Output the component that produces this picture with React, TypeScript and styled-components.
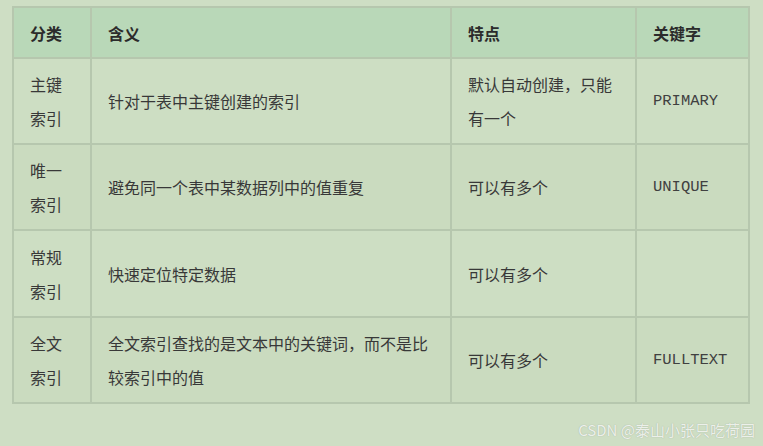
import { createGlobalStyle, styled } from 'styled-components';

const GlobalStyle = createGlobalStyle`
  html, body {
    margin: 0;
    padding: 0;
    background: #cedec4;
  }
  body {
    font-family: "Noto Sans CJK SC", "Liberation Sans", sans-serif;
    color: #333;
  }
`;

const Page = styled.div`
  width: 763px;
  height: 446px;
  padding: 6px 0 0 12px;
  box-sizing: border-box;
  display: flex;
  flex-direction: column;
`;

const Table = styled.table`
  table-layout: fixed;
  border-collapse: separate;
  border-spacing: 2px;
  background: #b6c7ae;
  width: 738px;
`;

const HeadCell = styled.th<{ w: number }>`
  width: ${(p) => p.w}px;
  height: 49px;
  padding: 0 0 0 16px;
  box-sizing: border-box;
  background: #b9d8b8;
  text-align: left;
  font-size: 16px;
  font-weight: 700;
  color: #2b2b2b;
`;

const Row = styled.tr<{ h: number; tone?: string }>`
  height: ${(p) => p.h}px;
  background: ${(p) => p.tone ?? '#cddec3'};
`;

const Cell = styled.td<{ mono?: boolean; narrow?: boolean }>`
  padding: 0 ${(p) => (p.narrow ? 20 : 12)}px 0 16px;
  box-sizing: border-box;
  vertical-align: middle;
  font-size: 16px;
  line-height: 34px;
  color: #383838;
  font-family: ${(p) => (p.mono ? '"Liberation Mono", monospace' : 'inherit')};
  ${(p) => (p.mono ? 'font-size: 15.5px; color: #404040;' : '')}
`;

const Watermark = styled.div`
  align-self: flex-end;
  margin: 15px 8px 0 0;
  font-size: 15px;
  color: rgba(250, 252, 248, 0.85);
  text-shadow: 0 0 1px rgba(120, 130, 120, 0.6);
  font-family: "Noto Sans CJK SC", "Liberation Sans", sans-serif;
`;

type Item = { kind: string; meaning: string; trait: string; key: string; h: number; tone?: string };

const rows: Item[] = [
  { kind: '主键索引', meaning: '针对于表中主键创建的索引', trait: '默认自动创建，只能有一个', key: 'PRIMARY', h: 84 },
  { kind: '唯一索引', meaning: '避免同一个表中某数据列中的值重复', trait: '可以有多个', key: 'UNIQUE', h: 84, tone: '#cadbbf' },
  { kind: '常规索引', meaning: '快速定位特定数据', trait: '可以有多个', key: '', h: 85 },
  { kind: '全文索引', meaning: '全文索引查找的是文本中的关键词，而不是比较索引中的值', trait: '可以有多个', key: 'FULLTEXT', h: 84, tone: '#cadbbf' },
];

export default function App() {
  return (
    <Page>
      <GlobalStyle />
      <Table>
        <thead>
          <tr>
            <HeadCell w={76}>分类</HeadCell>
            <HeadCell w={358}>含义</HeadCell>
            <HeadCell w={183}>特点</HeadCell>
            <HeadCell w={111}>关键字</HeadCell>
          </tr>
        </thead>
        <tbody>
          {rows.map((r) => (
            <Row key={r.kind} h={r.h} tone={r.tone}>
              <Cell narrow>{r.kind}</Cell>
              <Cell>{r.meaning}</Cell>
              <Cell>{r.trait}</Cell>
              <Cell mono>{r.key}</Cell>
            </Row>
          ))}
        </tbody>
      </Table>
      <Watermark>CSDN @泰山小张只吃荷园</Watermark>
    </Page>
  );
}
